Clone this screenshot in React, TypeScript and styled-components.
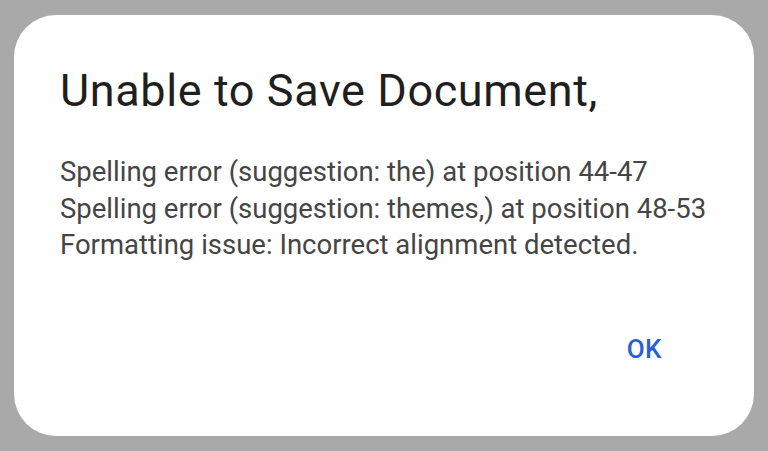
import { createGlobalStyle } from 'styled-components'
import styled from 'styled-components'

const GlobalStyle = createGlobalStyle`
  html, body {
    margin: 0;
    padding: 0;
    background: #a9a9a9;
  }
  body {
    width: 768px;
    height: 451px;
    overflow: hidden;
    font-family: Roboto, 'Noto Sans', sans-serif;
  }
`

const MESSAGES = [
  'Spelling error (suggestion: the) at position 44-47',
  'Spelling error (suggestion: themes,) at position 48-53',
  'Formatting issue: Incorrect alignment detected.'
]

export default function App() {
  return (
    <>
      <GlobalStyle />
      <Backdrop>
        <Dialog>
          <Title>Unable to Save Document,</Title>
          <Body>
            {MESSAGES.map((msg) => (
              <Line key={msg}>{msg}</Line>
            ))}
          </Body>
          <Actions>
            <OkButton>OK</OkButton>
          </Actions>
        </Dialog>
      </Backdrop>
    </>
  )
}

const Backdrop = styled.div`
  width: 768px;
  height: 451px;
  padding: 15px 14px;
  box-sizing: border-box;
`

const Dialog = styled.div`
  width: 100%;
  height: 100%;
  box-sizing: border-box;
  background: #fff;
  border-radius: 42px;
  padding: 49px 46px 0 46px;
  display: flex;
  flex-direction: column;
`

const Title = styled.div`
  font-size: 45px;
  line-height: 54px;
  color: #1f1f1f;
  font-weight: 400;
  letter-spacing: 0.6px;
`

const Body = styled.div`
  margin-top: 36px;
  display: flex;
  flex-direction: column;
`

const Line = styled.div`
  font-size: 27.5px;
  line-height: 36.5px;
  color: #454545;
`

const Actions = styled.div`
  display: flex;
  justify-content: flex-end;
  margin-top: 70px;
  padding-right: 46px;
`

const OkButton = styled.button`
  border: none;
  background: none;
  padding: 0;
  font-family: Roboto, 'Noto Sans', sans-serif;
  font-size: 26px;
  line-height: 30px;
  font-weight: 500;
  letter-spacing: 0.5px;
  color: #2a5fd8;
  cursor: pointer;
`
